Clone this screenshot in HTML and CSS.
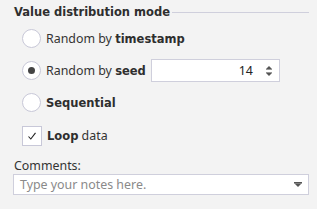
FILE: index.html
```html
<!DOCTYPE html>
<html>
<head>
<meta charset="utf-8">
<link rel="stylesheet" href="styles.css">
</head>
<body>
<div class="panel">
  <div class="legend">
    <span class="legend-title">Value distribution mode</span>
    <span class="legend-line"></span>
  </div>
  <div class="options">
    <div class="row">
      <span class="radio"></span>
      <span class="label">Random by <b>timestamp</b></span>
    </div>
    <div class="row row-spin">
      <span class="radio checked"></span>
      <span class="label">Random by <b>seed</b></span>
      <div class="spin">
        <span class="spin-value">14</span>
        <span class="spin-arrows">
          <svg width="8" height="16" viewBox="0 0 8 16">
            <path d="M4 3 L7 6 H1 Z" fill="#555"/>
            <rect x="1" y="6" width="6" height="1" fill="#999"/>
            <rect x="1" y="9" width="6" height="1" fill="#999"/>
            <path d="M1 10 H7 L4 13 Z" fill="#555"/>
          </svg>
        </span>
      </div>
    </div>
    <div class="row row-seq">
      <span class="radio"></span>
      <span class="label"><b>Sequential</b></span>
    </div>
    <div class="row">
      <span class="check">
        <svg width="10" height="10" viewBox="0 0 10 10"><path d="M1.5 5.5 L3.8 8 L8.5 1.8" fill="none" stroke="#222" stroke-width="1.1"/></svg>
      </span>
      <span class="label"><b>Loop</b> data</span>
    </div>
  </div>
  <div class="comments-label">Comments:</div>
  <div class="combo">
    <span class="placeholder">Type your notes here.</span>
    <svg class="combo-arrow" width="8" height="6" viewBox="0 0 8 6"><rect x="0" y="0" width="8" height="1.5" fill="#555"/><path d="M0.5 1.5 H7.5 L4 5 Z" fill="#555"/></svg>
  </div>
</div>
</body>
</html>
```
FILE: styles.css
```css
html, body {
  margin: 0;
  padding: 0;
  background: #f3f3f3;
}
body {
  font-family: "Noto Sans", "DejaVu Sans", sans-serif;
  font-size: 12.4px;
  color: #333;
}
b, .legend-title {
  font-family: "DejaVu Sans", sans-serif;
  font-weight: bold;
  font-size: 11.5px;
  color: #2e2e2e;
}
.panel {
  width: 317px;
  height: 209px;
  box-sizing: border-box;
  padding: 3px 8px 0 13px;
}
.legend {
  display: flex;
  align-items: center;
  height: 17px;
  padding-left: 1px;
}
.legend-title {
  white-space: nowrap;
}
.legend-line {
  flex: 1;
  height: 0;
  border-top: 1px solid #cfcfdc;
  margin-left: 2px;
  margin-top: 1px;
}
.options {
  display: flex;
  flex-direction: column;
  padding-left: 9px;
  margin-top: 8px;
}
.row {
  display: flex;
  align-items: center;
  height: 21px;
  margin-bottom: 11px;
}
.row-spin {
  height: 23px;
  margin-top: -1px;
  margin-bottom: 10px;
}
.row-seq {
  margin-bottom: 12px;
}
.radio {
  width: 17px;
  height: 17px;
  border: 1px solid #c8c8d8;
  border-radius: 50%;
  background: #fff;
  display: flex;
  align-items: center;
  justify-content: center;
  box-sizing: content-box;
}
.radio.checked::after {
  content: "";
  width: 7px;
  height: 7px;
  border-radius: 50%;
  background: #444;
}
.check {
  width: 18px;
  height: 18px;
  border: 1px solid #c8c8d8;
  background: #fff;
  display: flex;
  align-items: center;
  justify-content: center;
}
.label {
  margin-left: 5px;
  white-space: nowrap;
}
.spin {
  margin-left: 5px;
  width: 129px;
  height: 23px;
  box-sizing: border-box;
  border: 1px solid #cfcfdc;
  background: #fff;
  display: flex;
  align-items: center;
  justify-content: flex-end;
}
.spin-value {
  color: #222;
  margin-right: 12px;
}
.spin-arrows {
  display: flex;
  margin-right: 6px;
}
.comments-label {
  padding-left: 1px;
  line-height: 17px;
}
.combo {
  margin-top: 0;
  height: 19px;
  border: 1px solid #cfcfdc;
  background: #fff;
  display: flex;
  align-items: center;
  justify-content: space-between;
  padding: 0 6px 0 6px;
}
.placeholder {
  color: #8a8a8a;
}
.combo-arrow {
  display: block;
}
```
